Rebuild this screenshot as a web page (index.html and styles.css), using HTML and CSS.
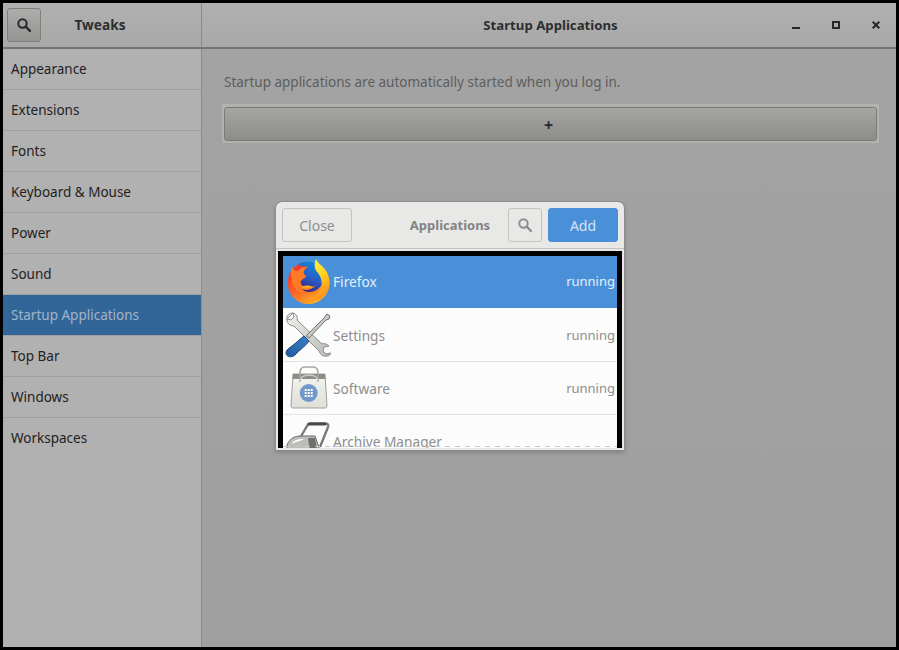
FILE: index.html
```html
<!DOCTYPE html>
<html lang="en">
<head>
    <meta charset="UTF-8">
    <title>Tweaks</title>
    <link rel="stylesheet" href="styles.css">
</head>
<body>
    <div class="window">
        <header class="titlebar">
            <div class="titlebar-left">
                <button class="icon-btn">
                    <svg width="16" height="16" viewBox="0 0 16 16"><circle cx="6.5" cy="6.5" r="4.2" fill="none" stroke="currentColor" stroke-width="2"/><path d="M9.7 9.7 14 14" stroke="currentColor" stroke-width="2.4" stroke-linecap="round"/></svg>
                </button>
                <span class="app-title">Tweaks</span>
            </div>
            <div class="titlebar-main">
                <span class="page-title">Startup Applications</span>
                <div class="win-controls">
                    <span class="win-min"></span>
                    <span class="win-max"></span>
                    <svg width="8" height="8" viewBox="0 0 8 8"><path d="M.7.7 7.3 7.3M7.3.7.7 7.3" stroke="#26282a" stroke-width="2"/></svg>
                </div>
            </div>
        </header>
        <div class="content">
            <nav class="sidebar">
                <div class="nav-row">Appearance</div>
                <div class="nav-row">Extensions</div>
                <div class="nav-row">Fonts</div>
                <div class="nav-row">Keyboard &amp; Mouse</div>
                <div class="nav-row">Power</div>
                <div class="nav-row">Sound</div>
                <div class="nav-row selected">Startup Applications</div>
                <div class="nav-row">Top Bar</div>
                <div class="nav-row">Windows</div>
                <div class="nav-row">Workspaces</div>
            </nav>
            <main class="main">
                <p class="hint">Startup applications are automatically started when you log in.</p>
                <div class="add-frame"><button class="add-row">+</button></div>
            </main>
        </div>
    </div>

    <div class="dialog">
        <div class="dialog-head">
            <button class="btn">Close</button>
            <span class="dialog-title">Applications</span>
            <button class="btn btn-search">
                <svg width="16" height="16" viewBox="0 0 16 16"><circle cx="6.5" cy="6.5" r="4.2" fill="none" stroke="currentColor" stroke-width="2"/><path d="M9.7 9.7 14 14" stroke="currentColor" stroke-width="2.4" stroke-linecap="round"/></svg>
            </button>
            <button class="btn btn-add">Add</button>
        </div>
        <div class="app-list">
            <div class="app-row active">
                <svg class="app-icon" width="48" height="48" viewBox="0 0 48 48">
                    <defs>
                        <linearGradient id="fxOuter" x1="0.1" y1="0.1" x2="0.7" y2="1"><stop offset="0" stop-color="#f0302f"/><stop offset="0.55" stop-color="#fb6a26"/><stop offset="1" stop-color="#ffb41f"/></linearGradient>
                        <linearGradient id="fxGlobe" x1="0.7" y1="0" x2="0.3" y2="1"><stop offset="0" stop-color="#0f8bdc"/><stop offset="0.55" stop-color="#2a5cc4"/><stop offset="1" stop-color="#3a1f80"/></linearGradient>
                        <linearGradient id="fxTail" x1="0.2" y1="0" x2="0.6" y2="1"><stop offset="0" stop-color="#fff44f"/><stop offset="0.5" stop-color="#ffd21f"/><stop offset="1" stop-color="#ff8a1c"/></linearGradient>
                    </defs>
                    <circle cx="25.5" cy="25" r="21" fill="url(#fxOuter)"/>
                    <path d="M9 8C10 12 12 13 15 13 18 9 22 8 25 9 22 11 20 13 21 16 24 18 23 20 20 21 17 23 17 26 20 28 24 30 29 30 33 27 31 34 23 37 16 34 9 30 6 18 9 8Z" fill="#ff7a25"/>
                    <path d="M15 6C20 3 30 2 36 8 43 15 42 26 35 31 30 35 22 35 19 31 23 33 29 32 33 27 29 30 24 30 20 28 17 26 17 23 20 21 23 20 24 18 21 16 20 13 22 11 25 9 22 8 18 9 15 6Z" fill="url(#fxGlobe)"/>
                    <path d="M18 29C22 27 27 27 30 29 26 31 22 31 18 29Z" fill="#ffa51f"/>
                    <path d="M33 1C31 6 31 11 35 15 39 20 40 27 37 33 34 38 29 41 24 42 33 44 41 40 45 32 48 24 46 15 40 9 37 6 34 4 33 1Z" fill="url(#fxTail)"/>
                </svg>
                <span class="app-name">Firefox</span>
                <span class="app-state">running</span>
            </div>
            <div class="app-row">
                <svg class="app-icon" width="48" height="48" viewBox="0 0 48 48">
                    <defs>
                        <linearGradient id="steel" x1="0" y1="0" x2="1" y2="1"><stop offset="0" stop-color="#f0f0ee"/><stop offset="1" stop-color="#b8bab5"/></linearGradient>
                        <linearGradient id="handle" x1="1" y1="0" x2="0" y2="1"><stop offset="0" stop-color="#3f80c8"/><stop offset="1" stop-color="#1f5a9e"/></linearGradient>
                    </defs>
                    <path d="M10 2C6 2 3 5 4 9 4 12 7 15 11 15L36 40C37 43 40 46 44 45 46 45 48 43 48 42L43 43 40 40 41 36 46 35C44 33 41 32 39 33L14 9C15 7 14 3 10 2L11 6 8 9 4 8Z" fill="url(#steel)" stroke="#8a8c86" stroke-width="1"/>
                    <path d="M44 3 47 5 46 8 43 9 26 27 23 25 41 7Z" fill="#c8c9c5" stroke="#72746e" stroke-width="1"/>
                    <path d="M21 25 26 30C23 35 16 39 12 44 9 47 3 46 3 42 3 39 6 37 9 35Z" fill="url(#handle)" stroke="#1c4a80" stroke-width="1"/>
                </svg>
                <span class="app-name">Settings</span>
                <span class="app-state">running</span>
            </div>
            <div class="app-row">
                <svg class="app-icon" width="48" height="48" viewBox="0 0 48 48">
                    <defs>
                        <linearGradient id="bag" x1="0" y1="0" x2="0" y2="1"><stop offset="0" stop-color="#f4f4f0"/><stop offset="1" stop-color="#dfdfd8"/></linearGradient>
                    </defs>
                    <path d="M10 10H42L44 42C44 43 43 44 42 44H10C9 44 8 43 8 42Z" fill="url(#bag)" stroke="#a0a09a" stroke-width="1"/>
                    <path d="M10 10H42L42.3 15H9.7Z" fill="#8c8c86"/>
                    <path d="M17 18V9C17 5 19 3 22 3H30C33 3 35 5 35 9V18" fill="none" stroke="#a5a5a0" stroke-width="1.6"/>
                    <path d="M17 18C17 14 20 11 26 11 32 11 35 14 35 18" fill="none" stroke="#c8c8c4" stroke-width="1.4"/>
                    <circle cx="25.7" cy="29" r="9" fill="#7297c9"/>
                    <path d="M21.700 25h2v2h-2zM24.700 25h2v2h-2zM27.700 25h2v2h-2zM21.700 28h2v2h-2zM24.700 28h2v2h-2zM27.700 28h2v2h-2zM21.700 31h2v2h-2zM24.700 31h2v2h-2zM27.700 31h2v2h-2z" fill="#fff"/>
                </svg>
                <span class="app-name">Software</span>
                <span class="app-state">running</span>
            </div>
            <div class="app-row">
                <svg class="app-icon" width="48" height="48" viewBox="0 0 48 48">
                    <path d="M17 21 24 9C25 7 26 6.500 28 6.500H42C45 6.500 46 8 45 10L37 30" fill="none" stroke="#7a7a76" stroke-width="2.4"/>
                    <path d="M26 7H42" stroke="#4a4a47" stroke-width="3" stroke-linecap="round"/>
                    <path d="M4 28C7 21 12 19 18 19H32L38 36H4Z" fill="#bdbdb9" stroke="#6a6a66" stroke-width="1"/>
                    <path d="M8 27C11 23 15 22 21 22 18 24 12 25 8 27Z" fill="#fff"/>
                    <path d="M25 21H32L35 36H27Z" fill="#6f6f6b"/>
                </svg>
                <span class="app-name">Archive Manager</span>
                <span class="app-state"></span>
            </div>
            <div class="list-dashes"></div>
        </div>
    </div>
</body>
</html>
```

FILE: styles.css
```css
* {
    box-sizing: border-box;
}
html, body {
    height: 100%;
}
body {
    margin: 0;
    padding: 3px;
    background-color: #000;
    font-family: "Noto Sans", sans-serif;
    font-size: 13.5px;
    color: #1f2122;
    overflow: hidden;
}
button {
    font: inherit;
    padding: 0;
}
.window {
    display: flex;
    flex-direction: column;
    height: 100%;
}
.titlebar {
    display: flex;
    height: 46px;
    flex-shrink: 0;
    background: linear-gradient(#b0b0b0, #a9a9a9);
    border-bottom: 2px solid #757572;
}
.titlebar-left {
    position: relative;
    display: flex;
    align-items: center;
    justify-content: center;
    width: 199px;
    padding: 0 4px 1px 0;
    border-right: 1px solid #8a8a88;
}
.icon-btn {
    position: absolute;
    left: 4px;
    top: 5px;
    display: flex;
    align-items: center;
    justify-content: center;
    width: 34px;
    height: 34px;
    color: #26282a;
    background: linear-gradient(#adadab, #949491);
    border: 1px solid #7f7f7c;
    border-radius: 3px;
}
.app-title {
    font-size: 13.7px;
    font-weight: 700;
    color: #2c2e30;
}
.titlebar-main {
    display: flex;
    flex: 1;
    align-items: center;
    justify-content: center;
    position: relative;
    padding: 0 0 1px 3px;
}
.page-title {
    font-size: 13.2px;
    font-weight: 700;
    color: #2c2e30;
}
.win-controls {
    position: absolute;
    right: 16px;
    top: 0;
    bottom: 0;
    display: flex;
    align-items: center;
    gap: 32px;
}
.win-min {
    width: 8px;
    height: 2px;
    margin-top: 6px;
    background-color: #26282a;
}
.win-max {
    width: 8px;
    height: 8px;
    border: 2px solid #26282a;
}
.content {
    display: flex;
    flex: 1;
    min-height: 0;
}
.sidebar {
    width: 199px;
    flex-shrink: 0;
    background-color: #b1b1b1;
    border-right: 1px solid #8c8c8a;
}
.nav-row {
    display: flex;
    align-items: center;
    height: 41px;
    padding: 0 0 1px 8px;
    border-bottom: 1px solid #a0a09f;
}
.nav-row:last-child {
    border-bottom: none;
}
.nav-row.selected {
    background-color: #326699;
    background-clip: padding-box;
    color: #a3b4c6;
}
.main {
    flex: 1;
    padding: 24px 17px 0 20px;
    background: linear-gradient(#a3a3a3, #9f9f9f);
}
.hint {
    margin: 0 0 12px 2px;
    line-height: 19px;
    color: #5d5e5e;
}
.add-frame {
    padding: 3px 2px 2px;
    background-color: #b1b1af;
}
.add-row {
    display: block;
    width: 100%;
    height: 34px;
    padding: 2px 4px 0 0;
    font-size: 16px;
    font-weight: 700;
    color: #26282a;
    background: linear-gradient(#a6a6a4, #8c8c8a);
    border: 1px solid #7a7a77;
    border-radius: 3px;
}

.dialog {
    position: absolute;
    left: 276px;
    top: 202px;
    width: 348px;
    height: 248px;
    display: flex;
    flex-direction: column;
    background-color: #e8e8e7;
    border-radius: 6px 6px 0 0;
    box-shadow: 0 0 0 1px #8b8b8b, 0 2px 5px rgba(0, 0, 0, 0.25);
    overflow: hidden;
}
.dialog-head {
    display: flex;
    align-items: center;
    gap: 6px;
    height: 47px;
    flex-shrink: 0;
    padding: 0 6px;
    border-bottom: 1px solid #c4c4c1;
}
.btn {
    width: 70px;
    height: 34px;
    font-size: 14px;
    color: #8d8e8e;
    background-color: #e8e8e7;
    border: 1px solid #c4c4c1;
    border-radius: 3px;
}
.dialog-title {
    flex: 1;
    padding-left: 40px;
    text-align: center;
    font-size: 13px;
    font-weight: 700;
    color: #838484;
}
.btn-search {
    display: flex;
    align-items: center;
    justify-content: center;
    width: 34px;
}
.btn-add {
    color: #d5e3f3;
    background-color: #4a90d9;
    border-color: #4a90d9;
}
.app-list {
    position: relative;
    flex: 1;
    min-height: 0;
    margin: 2px 2px 2px;
    overflow: hidden;
    background-color: #fcfcfc;
    border-top: 5px solid #000;
    border-left: 5px solid #000;
    border-right: 5px solid #000;
}
.app-row {
    display: flex;
    align-items: center;
    height: 53px;
    padding: 0 2px 0 0;
    color: #8d8e8e;
    background-color: #fcfcfc;
    border-bottom: 1px solid #e3e3e2;
}
.app-row.active {
    height: 52px;
    margin-bottom: 1px;
    padding: 0 2px 2px 0;
    background-color: #4a90d9;
    color: #e4eef9;
    border-bottom: none;
}
.app-row.active .app-icon {
    margin-top: 2px;
}
.app-icon {
    flex-shrink: 0;
    margin-right: 2px;
}
.app-name {
    flex: 1;
    font-size: 13.7px;
}
.app-state {
    font-size: 13px;
}
.list-dashes {
    position: absolute;
    left: 0;
    right: 0;
    bottom: 1px;
    height: 1px;
    background: repeating-linear-gradient(90deg, #c8c8c8 0 5px, transparent 5px 10px) 2px 0;
}
```
